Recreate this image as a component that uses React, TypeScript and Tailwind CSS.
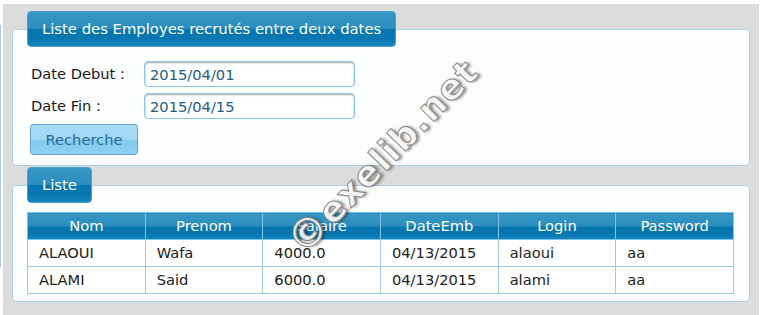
import React from "react";

const F = "font-['DejaVu_Sans',Verdana,sans-serif]";
const HEAD =
  "bg-[linear-gradient(to_bottom,#3797c5_0%,#2b8ebf_48%,#0475af_52%,#0677b1_78%,#1885bc_100%)]";

const rows = [
  ["ALAOUI", "Wafa", "4000.0", "04/13/2015", "alaoui", "aa"],
  ["ALAMI", "Said", "6000.0", "04/13/2015", "alami", "aa"],
];
const cols = ["Nom", "Prenom", "Salaire", "DateEmb", "Login", "Password"];

function Legend({ children }: { children: React.ReactNode }) {
  return (
    <legend
      className={`${HEAD} border border-[#4aa0cf] rounded-[4px] px-[14px] py-[8px] leading-[18px] text-white text-[14.8px]`}
    >
      {children}
    </legend>
  );
}

export default function App() {
  return (
    <div className={`relative flex w-[767px] h-[315px] bg-white overflow-hidden ${F}`}>
      <div className="w-[3px] shrink-0">
        <div className="mt-[25px] h-[242px] w-px bg-[#a9cde6]" />
      </div>
      <div className="mt-[4px] w-[756px] shrink-0 bg-[#dcdcdc] pl-[9px] pr-[9px] pt-[7px] flex flex-col">
        <fieldset className="border border-[#a8d0ea] rounded-[5px] bg-[#fcfefe] pl-[14px] pr-[15px] pt-[14px] pb-[10px]">
          <Legend>Liste des Employes recrutés entre deux dates</Legend>
          <div className="flex flex-col gap-[6px] pl-[4px] text-[14.67px] text-[#1a1a1a]">
            <div className="flex items-center">
              <span className="w-[113px]">Date Debut :</span>
              <input
                readOnly
                value="2015/04/01"
                className="w-[211px] h-[26px] border border-[#86c6ec] rounded-[4px] bg-white px-[5px] text-[#1d5b88] shadow-[inset_0_1px_2px_rgba(0,0,0,0.35)] outline-none"
              />
            </div>
            <div className="flex items-center">
              <span className="w-[113px]">Date Fin :</span>
              <input
                readOnly
                value="2015/04/15"
                className="w-[211px] h-[26px] border border-[#86c6ec] rounded-[4px] bg-white px-[5px] text-[#1d5b88] shadow-[inset_0_1px_2px_rgba(0,0,0,0.35)] outline-none"
              />
            </div>
          </div>
          <button
            className="mt-[5px] ml-[3px] w-[108px] h-[31px] border border-[#62a6dc] rounded-[3px] bg-[linear-gradient(to_bottom,#a9dcf6_0%,#a0d8f5_48%,#83ccf0_55%,#8fd1f2_100%)] text-[14.67px] text-[#2b6a98]"
          >
            Recherche
          </button>
        </fieldset>
        <fieldset className="mt-[1px] border border-[#a8d0ea] rounded-[5px] bg-[#fcfefe] pl-[14px] pr-[15px] pt-[9px] pb-[7px]">
          <Legend>Liste</Legend>
          <table className="w-[707px] table-fixed border-collapse text-[14.67px]">
            <thead>
              <tr>
                {cols.map((c) => (
                  <th
                    key={c}
                    className={`${HEAD} h-[27px] border border-[#7cc6ee] font-normal text-white text-center p-0`}
                  >
                    {c}
                  </th>
                ))}
              </tr>
            </thead>
            <tbody>
              {rows.map((r, i) => (
                <tr key={i} className="bg-white">
                  {r.map((v, j) => (
                    <td
                      key={j}
                      className="h-[27px] border border-[#9ccbe8] pl-[11px] py-0 text-[#222]"
                    >
                      {v}
                    </td>
                  ))}
                </tr>
              ))}
            </tbody>
          </table>
        </fieldset>
      </div>
      <div className="flex-1" />
      <div className="pointer-events-none absolute left-[226px] top-[135px] w-[314px] text-center rotate-[-46deg]">
        <span className="font-bold text-[35px] leading-[40px] tracking-[1.5px] text-white/90 [-webkit-text-stroke:1px_#8a8a8a] [text-shadow:2px_2px_3px_rgba(0,0,0,0.45)]">
          <span className="text-[40px]">©</span>exelib.net
        </span>
      </div>
    </div>
  );
}
